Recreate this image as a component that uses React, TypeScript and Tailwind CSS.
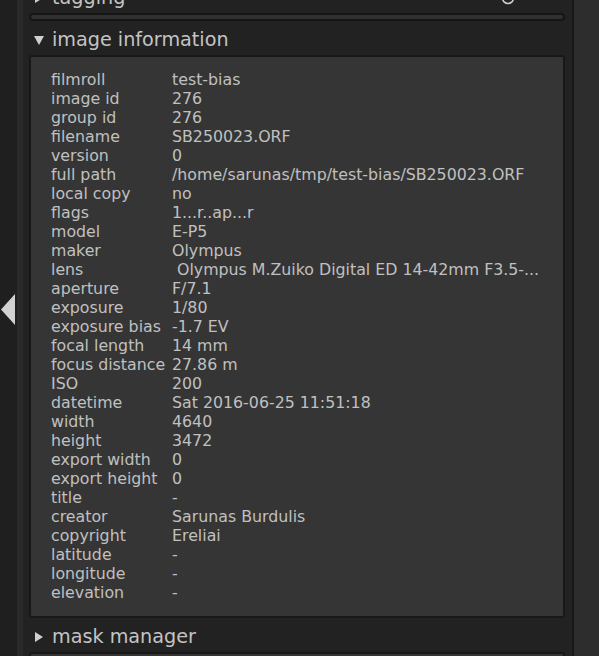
const rows: [string, string][] = [
  ["filmroll", "test-bias"],
  ["image id", "276"],
  ["group id", "276"],
  ["filename", "SB250023.ORF"],
  ["version", "0"],
  ["full path", "/home/sarunas/tmp/test-bias/SB250023.ORF"],
  ["local copy", "no"],
  ["flags", "1...r..ap...r"],
  ["model", "E-P5"],
  ["maker", "Olympus"],
  ["lens", "\u00a0Olympus M.Zuiko Digital ED 14-42mm F3.5-..."],
  ["aperture", "F/7.1"],
  ["exposure", "1/80"],
  ["exposure bias", "-1.7 EV"],
  ["focal length", "14 mm"],
  ["focus distance", "27.86 m"],
  ["ISO", "200"],
  ["datetime", "Sat 2016-06-25 11:51:18"],
  ["width", "4640"],
  ["height", "3472"],
  ["export width", "0"],
  ["export height", "0"],
  ["title", "-"],
  ["creator", "Sarunas Burdulis"],
  ["copyright", "Ereliai"],
  ["latitude", "-"],
  ["longitude", "-"],
  ["elevation", "-"],
];

function SectionHeader({ title, open }: { title: string; open?: boolean }) {
  return (
    <div className="flex h-[34px] items-center pl-[5px] pt-[4px] text-[19.2px] text-[#c4c4c4]">
      <span className="flex w-[18px] items-center">
        {open ? (
          <svg width="10" height="10" viewBox="0 0 10 10">
            <polygon points="0,1 10,1 5,10" fill="#d0d0d0" />
          </svg>
        ) : (
          <svg width="10" height="10" viewBox="0 0 10 10">
            <polygon points="1,0 9,5 1,10" fill="#d0d0d0" />
          </svg>
        )}
      </span>
      <span>{title}</span>
    </div>
  );
}

export default function App() {
  return (
    <div
      className="flex h-[656px] w-[599px] overflow-hidden bg-[#2d2d2d]"
      style={{ fontFamily: '"DejaVu Sans", Verdana, sans-serif' }}
    >
      {/* collapsed left border with arrow */}
      <div className="w-[17px] shrink-0 bg-[#1f1f1f] pt-[294px]">
        <svg width="16" height="32" viewBox="0 0 16 32" className="block">
          <polygon points="15,0 15,31 1,15.5" fill="#d2d2d2" />
        </svg>
      </div>
      <div className="w-[6px] shrink-0 bg-[#2a2a2a]" />

      {/* right panel */}
      <div className="w-[549px] shrink-0 bg-[#222222] pl-[6px] pr-[7px]">
        <div className="relative -mt-[21px]">
          <SectionHeader title="tagging" />
          <svg
            width="14"
            height="14"
            viewBox="0 0 14 14"
            className="absolute right-[50px] top-[12px]"
          >
            <circle cx="7" cy="7" r="5.5" fill="none" stroke="#cfcfcf" strokeWidth="1.6" />
            <circle cx="7" cy="7" r="1.6" fill="#cfcfcf" />
          </svg>
        </div>
        <div className="h-[8px] rounded-[4px] border-2 border-[#151515] bg-[#303030]" />

        <SectionHeader title="image information" open />
        <div className="rounded-[3px] border-2 border-[#181818] bg-[#353535] pb-[14px] pl-[20px] pt-[13px] text-[15.8px] leading-[19px] text-[#c0c0c0]">
          {rows.map(([k, v]) => (
            <div key={k} className="flex whitespace-nowrap">
              <span className="w-[121px] shrink-0">{k}</span>
              <span>{v}</span>
            </div>
          ))}
        </div>

        <SectionHeader title="mask manager" />
        <div className="h-[20px] rounded-[3px] border-2 border-[#181818] bg-[#353535]" />
      </div>
      <div className="w-[2px] shrink-0 bg-[#171717]" />
    </div>
  );
}
